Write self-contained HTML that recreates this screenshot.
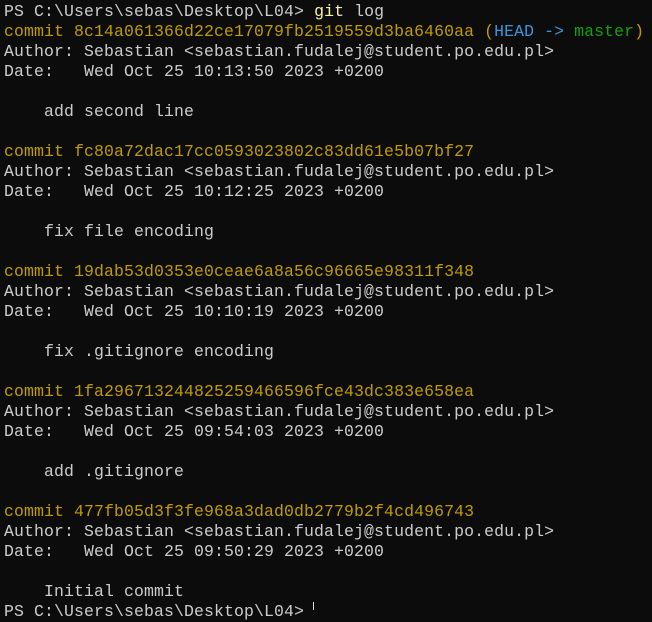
<!DOCTYPE html>
<html><head><style>
html,body{margin:0;padding:0;background:#0c0c0c;width:652px;height:607px;overflow:hidden}
pre{margin:0;position:absolute;left:4px;top:2px;font-family:"Liberation Mono",monospace;font-size:16.5px;letter-spacing:0.1px;line-height:20px;color:#cccccc;white-space:pre}
.y{color:#c19c00}.c{color:#3a96dd}.g{color:#13a10e}.w{color:#f9f1a5}
.cur{position:absolute;left:313px;top:602px;width:1px;height:8px;background:#ddd}
</style></head><body>
<pre>PS C:\Users\sebas\Desktop\L04&gt; <span class="w">git</span> log
<span class="y">commit 8c14a061366d22ce17079fb2519559d3ba6460aa (</span><span class="c">HEAD -&gt; </span><span class="g">master</span><span class="y">)</span>
Author: Sebastian &lt;sebastian.fudalej@student.po.edu.pl&gt;
Date:   Wed Oct 25 10:13:50 2023 +0200

    add second line

<span class="y">commit fc80a72dac17cc0593023802c83dd61e5b07bf27</span>
Author: Sebastian &lt;sebastian.fudalej@student.po.edu.pl&gt;
Date:   Wed Oct 25 10:12:25 2023 +0200

    fix file encoding

<span class="y">commit 19dab53d0353e0ceae6a8a56c96665e98311f348</span>
Author: Sebastian &lt;sebastian.fudalej@student.po.edu.pl&gt;
Date:   Wed Oct 25 10:10:19 2023 +0200

    fix .gitignore encoding

<span class="y">commit 1fa296713244825259466596fce43dc383e658ea</span>
Author: Sebastian &lt;sebastian.fudalej@student.po.edu.pl&gt;
Date:   Wed Oct 25 09:54:03 2023 +0200

    add .gitignore

<span class="y">commit 477fb05d3f3fe968a3dad0db2779b2f4cd496743</span>
Author: Sebastian &lt;sebastian.fudalej@student.po.edu.pl&gt;
Date:   Wed Oct 25 09:50:29 2023 +0200

    Initial commit
PS C:\Users\sebas\Desktop\L04&gt;</pre>
<div class="cur"></div>
</body></html>
